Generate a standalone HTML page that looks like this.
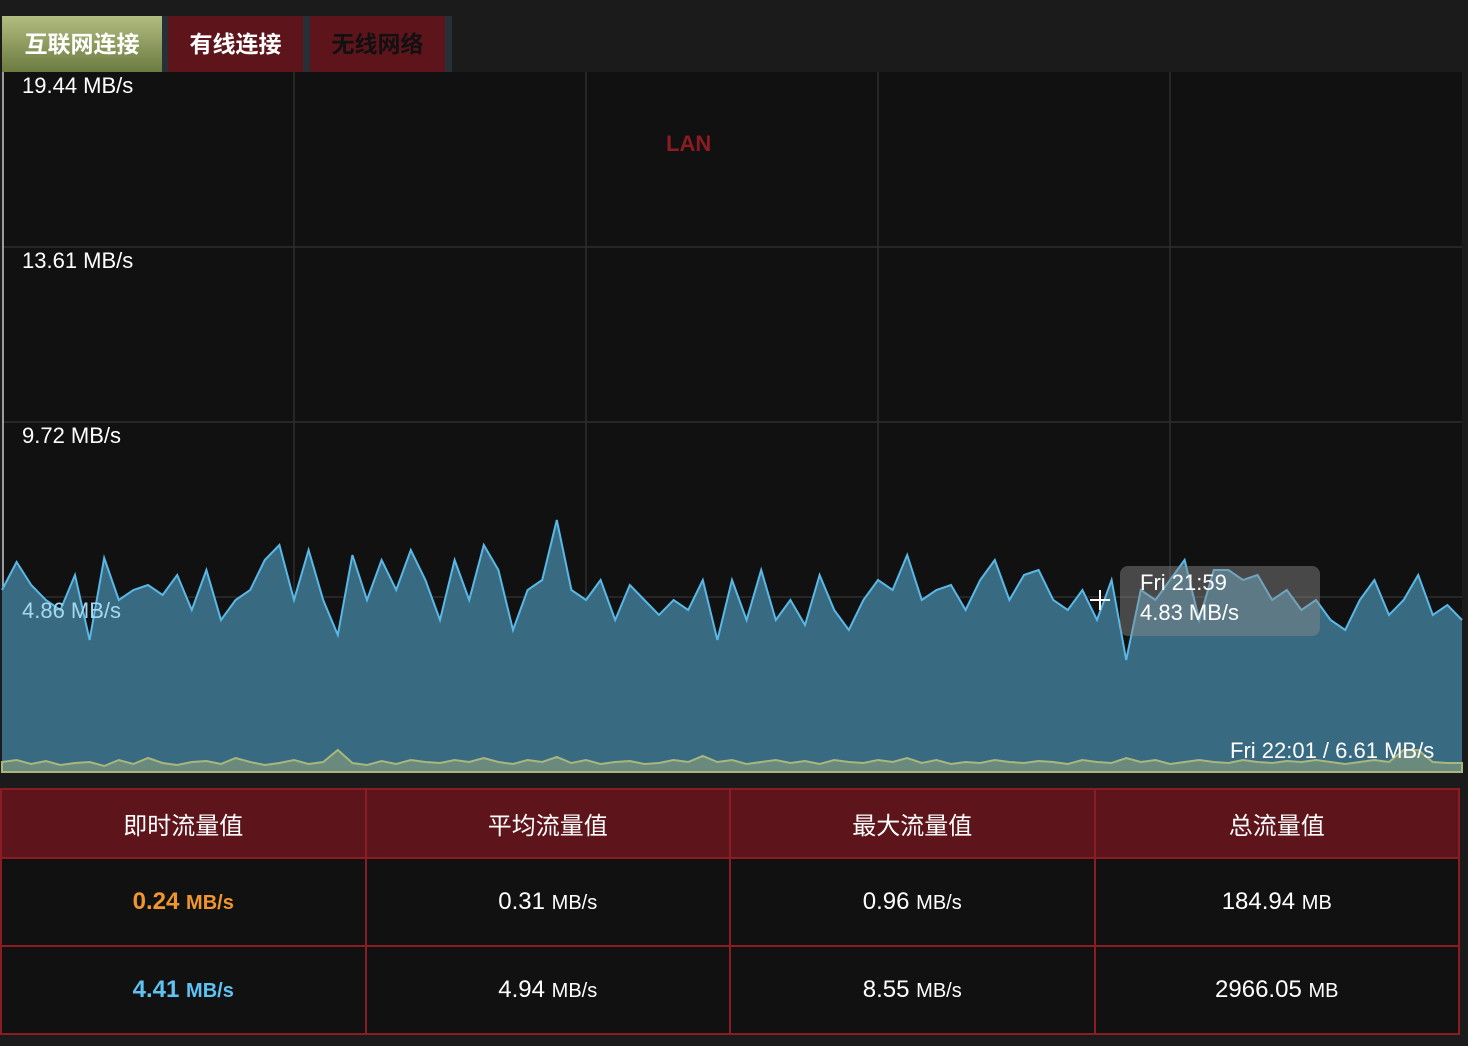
<!DOCTYPE html>
<html><head><meta charset="utf-8"><style>
*{margin:0;padding:0;box-sizing:border-box}
body{width:1468px;height:1046px;background:#1b1b1b;font-family:"Liberation Sans","Noto Sans CJK SC",sans-serif;position:relative;overflow:hidden}
.tab{position:absolute;top:16px;height:56px;font-size:23px;font-weight:bold;line-height:56px;text-align:center}
table{position:absolute;left:0;top:788px;width:1460px;border-collapse:collapse;table-layout:fixed}
td{border:2px solid #8a1c22;text-align:center;color:#fff;font-size:24px}
tr.h td{background:#5e141b;height:69px;font-size:24px}
tr.r td{background:#111;height:88px}
small{font-size:20px}
</style></head><body>
<div style="position:absolute;left:2px;top:16px;width:450px;height:56px;background:#263036"></div>
<div class="tab" style="left:2px;width:160px;background:linear-gradient(#b2bc80,#6c7b40);color:#fff">互联网连接</div>
<div class="tab" style="left:168px;width:135px;background:#5e141b;color:#fff">有线连接</div>
<div class="tab" style="left:310px;width:135px;background:#5e141b;color:#111">无线网络</div>
<svg style="position:absolute;left:0;top:0" width="1468" height="780">
<rect x="2" y="72" width="1460" height="700" fill="#111"/>
<g stroke="#2e2e2e" stroke-width="1.5">
<line x1="2" y1="247" x2="1462" y2="247"/><line x1="2" y1="422" x2="1462" y2="422"/><line x1="2" y1="597" x2="1462" y2="597"/>
<line x1="294" y1="72" x2="294" y2="772"/><line x1="586" y1="72" x2="586" y2="772"/><line x1="878" y1="72" x2="878" y2="772"/><line x1="1170" y1="72" x2="1170" y2="772"/>
</g>
<line x1="3" y1="72" x2="3" y2="772" stroke="#ccc" stroke-width="1.5"/>
<g transform="translate(2,0) scale(14.6,1)">
<polygon fill="#386a82" points="0,772 0,590 1,562 2,585 3,600 4,610 5,575 6,640 7,558 8,600 9,590 10,585 11,595 12,575 13,610 14,570 15,620 16,600 17,590 18,560 19,545 20,600 21,550 22,600 23,635 24,555 25,600 26,560 27,590 28,550 29,580 30,620 31,560 32,600 33,545 34,570 35,630 36,590 37,580 38,520 39,590 40,600 41,580 42,620 43,585 44,600 45,615 46,600 47,610 48,580 49,640 50,580 51,620 52,570 53,620 54,600 55,625 56,575 57,610 58,630 59,600 60,580 61,590 62,555 63,600 64,590 65,585 66,610 67,580 68,560 69,600 70,575 71,570 72,600 73,610 74,590 75,620 76,580 77,660 78,590 79,600 80,580 81,560 82,620 83,570 84,570 85,580 86,575 87,600 88,590 89,610 90,600 91,620 92,630 93,600 94,580 95,615 96,600 97,575 98,615 99,605 100,620 100,772"/>
<polyline fill="none" stroke="#5ab8e6" stroke-width="2" vector-effect="non-scaling-stroke" points="0,590 1,562 2,585 3,600 4,610 5,575 6,640 7,558 8,600 9,590 10,585 11,595 12,575 13,610 14,570 15,620 16,600 17,590 18,560 19,545 20,600 21,550 22,600 23,635 24,555 25,600 26,560 27,590 28,550 29,580 30,620 31,560 32,600 33,545 34,570 35,630 36,590 37,580 38,520 39,590 40,600 41,580 42,620 43,585 44,600 45,615 46,600 47,610 48,580 49,640 50,580 51,620 52,570 53,620 54,600 55,625 56,575 57,610 58,630 59,600 60,580 61,590 62,555 63,600 64,590 65,585 66,610 67,580 68,560 69,600 70,575 71,570 72,600 73,610 74,590 75,620 76,580 77,660 78,590 79,600 80,580 81,560 82,620 83,570 84,570 85,580 86,575 87,600 88,590 89,610 90,600 91,620 92,630 93,600 94,580 95,615 96,600 97,575 98,615 99,605 100,620"/>
<polygon fill="#6a8a7e" stroke="#a9b67c" stroke-width="2" vector-effect="non-scaling-stroke" points="0,772 0,762 1,760 2,764 3,761 4,765 5,763 6,762 7,766 8,760 9,764 10,758 11,763 12,765 13,762 14,761 15,764 16,758 17,762 18,765 19,763 20,760 21,764 22,762 23,750 24,763 25,765 26,761 27,764 28,760 29,762 30,763 31,760 32,762 33,758 34,762 35,764 36,760 37,762 38,757 39,763 40,760 41,764 42,762 43,761 44,764 45,763 46,760 47,762 48,756 49,762 50,760 51,764 52,762 53,760 54,763 55,761 56,764 57,760 58,762 59,763 60,760 61,762 62,758 63,763 64,760 65,764 66,762 67,763 68,760 69,762 70,763 71,761 72,762 73,764 74,760 75,762 76,763 77,758 78,762 79,760 80,764 81,762 82,760 83,762 84,763 85,760 86,762 87,763 88,761 89,762 90,760 91,762 92,764 93,762 94,760 95,762 96,750 97,750 98,762 99,763 100,763 100,772"/>
</g>
<g fill="#fff" font-size="22" font-family="Liberation Sans,sans-serif">
<text x="22" y="93">19.44 MB/s</text><text x="22" y="268">13.61 MB/s</text><text x="22" y="443">9.72 MB/s</text>
<text x="22" y="618" fill="#a6d8f0">4.86 MB/s</text>
<text x="1230" y="758">Fri 22:01 / 6.61 MB/s</text>
</g>
<text x="666" y="151" fill="#8a1c22" font-size="22" font-weight="bold" font-family="Liberation Sans,sans-serif">LAN</text>
<rect x="1120" y="566" width="200" height="70" rx="8" fill="rgba(140,140,140,0.45)"/>
<text x="1140" y="590" fill="#fff" font-size="22" font-family="Liberation Sans,sans-serif">Fri 21:59</text>
<text x="1140" y="620" fill="#fff" font-size="22" font-family="Liberation Sans,sans-serif">4.83 MB/s</text>
<path d="M1100 590v20M1090 600h20" stroke="#fff" stroke-width="2"/>
</svg>
<table>
<tr class="h"><td>即时流量值</td><td>平均流量值</td><td>最大流量值</td><td>总流量值</td></tr>
<tr class="r"><td style="color:#f0962e;font-weight:bold">0.24 <small>MB/s</small></td><td>0.31 <small>MB/s</small></td><td>0.96 <small>MB/s</small></td><td>184.94 <small>MB</small></td></tr>
<tr class="r"><td style="color:#5ec2f2;font-weight:bold">4.41 <small>MB/s</small></td><td>4.94 <small>MB/s</small></td><td>8.55 <small>MB/s</small></td><td>2966.05 <small>MB</small></td></tr>
</table>
</body></html>
